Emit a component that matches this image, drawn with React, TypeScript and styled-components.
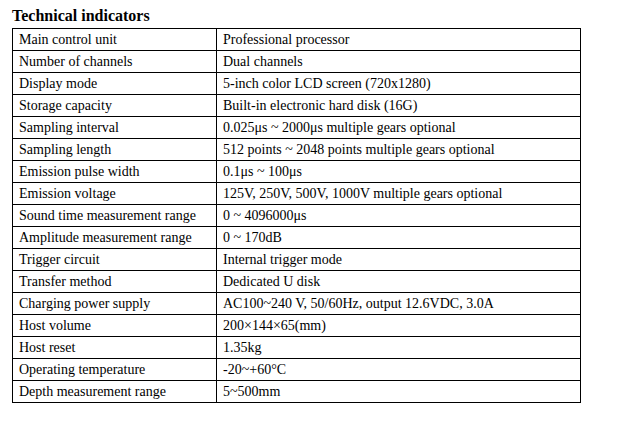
import React from "react";
import styled, { createGlobalStyle } from "styled-components";

const Global = createGlobalStyle`
  html, body { margin: 0; padding: 0; background: #fff; }
  body { font-family: "Liberation Serif", "Times New Roman", serif; color: #000; }
`;

const Page = styled.div`
  padding: 7px 0 0 12px;
  width: 618px;
  height: 431px;
  box-sizing: border-box;
  overflow: hidden;
`;

const Title = styled.h3`
  margin: 0 0 3px 0;
  font-family: "Liberation Serif", "Times New Roman", serif;
  font-weight: bold;
  font-size: 16px;
  line-height: 18px;
`;

const Table = styled.table`
  border-collapse: collapse;
  width: 569px;
  font-family: "Liberation Serif", "Times New Roman", serif;
  font-size: 14px;
`;

const Row = styled.tr`
  height: 22px;
`;

const Cell = styled.td<{ $w?: number }>`
  border: 1px solid #000;
  padding: 0 6px;
  width: ${(p) => (p.$w ? `${p.$w}px` : "auto")};
  line-height: 16px;
  vertical-align: middle;
  white-space: nowrap;
`;

const rows: [string, string][] = [
  ["Main control unit", "Professional processor"],
  ["Number of channels", "Dual channels"],
  ["Display mode", "5-inch color LCD screen (720x1280)"],
  ["Storage capacity", "Built-in electronic hard disk (16G)"],
  ["Sampling interval", "0.025μs ~ 2000μs multiple gears optional"],
  ["Sampling length", "512 points ~ 2048 points multiple gears optional"],
  ["Emission pulse width", "0.1μs ~ 100μs"],
  ["Emission voltage", "125V, 250V, 500V, 1000V multiple gears optional"],
  ["Sound time measurement range", "0 ~ 4096000μs"],
  ["Amplitude measurement range", "0 ~ 170dB"],
  ["Trigger circuit", "Internal trigger mode"],
  ["Transfer method", "Dedicated U disk"],
  ["Charging power supply", "AC100~240 V, 50/60Hz, output 12.6VDC, 3.0A"],
  ["Host volume", "200×144×65(mm)"],
  ["Host reset", "1.35kg"],
  ["Operating temperature", "-20~+60°C"],
  ["Depth measurement range", "5~500mm"],
];

export default function App() {
  return (
    <>
      <Global />
      <Page>
        <Title>Technical indicators</Title>
        <Table>
          <tbody>
            {rows.map(([k, v]) => (
              <Row key={k}>
                <Cell $w={191}>{k}</Cell>
                <Cell>{v}</Cell>
              </Row>
            ))}
          </tbody>
        </Table>
      </Page>
    </>
  );
}
